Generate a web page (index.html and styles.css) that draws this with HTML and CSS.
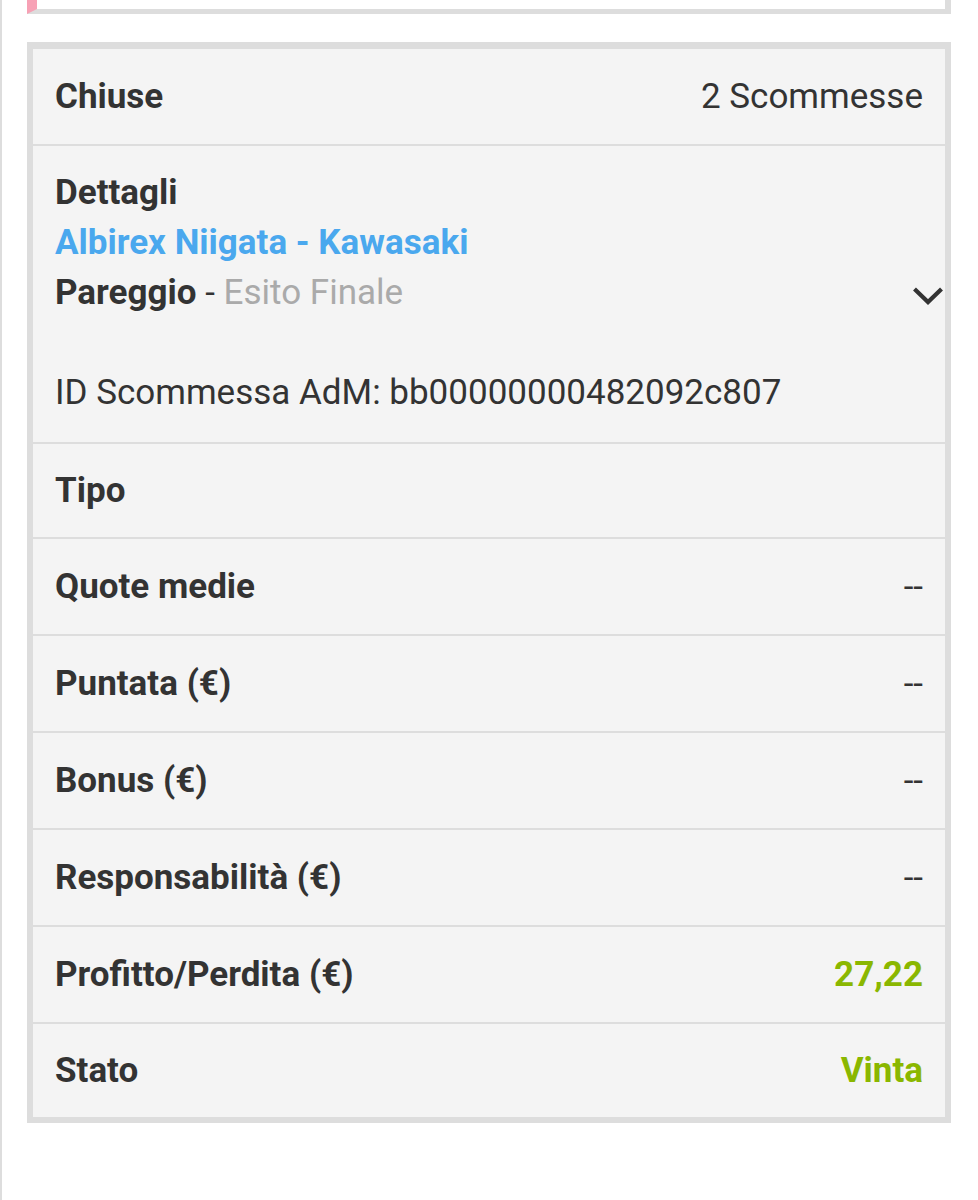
FILE: index.html
```html
<!DOCTYPE html>
<html>
  <head>
    <title>Scommesse chiuse</title>
    <link rel="stylesheet" href="styles.css">
  </head>
  <body>
    <div class="page">
      <!-- previous card, cut off at the top -->
      <div class="prev-card"></div>

      <div class="bet-card">
        <div class="row">
          <span class="label">Chiuse</span>
          <span class="value">2 Scommesse</span>
        </div>

        <div class="details">
          <div class="label">Dettagli</div>
          <div class="event">Albirex Niigata - Kawasaki</div>
          <div class="selection">
            <span><b>Pareggio</b> - <span class="market">Esito Finale</span></span>
            <svg class="chevron" width="32" height="20" viewBox="0 0 32 20">
              <path d="M2.5 3 L16 16 L29.5 3" fill="none" stroke="#333" stroke-width="4.2"/>
            </svg>
          </div>
          <div class="spacer"></div>
          <div class="bet-id">ID Scommessa AdM: bb00000000482092c807</div>
        </div>

        <div class="row short">
          <span class="label">Tipo</span>
        </div>
        <div class="row">
          <span class="label">Quote medie</span>
          <span class="value">--</span>
        </div>
        <div class="row">
          <span class="label">Puntata (€)</span>
          <span class="value">--</span>
        </div>
        <div class="row">
          <span class="label">Bonus (€)</span>
          <span class="value">--</span>
        </div>
        <div class="row">
          <span class="label">Responsabilità (€)</span>
          <span class="value">--</span>
        </div>
        <div class="row">
          <span class="label">Profitto/Perdita (€)</span>
          <span class="value win">27,22</span>
        </div>
        <div class="row short">
          <span class="label">Stato</span>
          <span class="value win">Vinta</span>
        </div>
      </div>
    </div>
  </body>
</html>
```

FILE: styles.css
```css
body {
  margin: 0;
  background-color: #fff;
  font-family: Roboto, "Noto Sans", sans-serif;
  color: #333;
}

.page {
  min-height: 1200px;
  border-left: 2px solid #ddd;
  padding-left: 25px;
  width: 924px;
}

.prev-card {
  height: 9px;
  background-color: #fff;
  border-left: 10px solid #f7a1b5;
  border-right: 6px solid #ddd;
  border-bottom: 5px solid #ddd;
}

.bet-card {
  margin-top: 28px;
  background-color: #f4f4f4;
  border: 6px solid #ddd;
  border-top-width: 7px;
}

.row {
  display: flex;
  justify-content: space-between;
  align-items: center;
  height: 95px;
  padding: 0 22px;
  font-size: 35px;
  border-top: 2px solid #ddd;
}
.row:first-child {
  border-top: none;
}
.row.short {
  height: 93px;
}

.label {
  font-weight: bold;
}

.value.win {
  color: #8ab700;
  font-weight: bold;
}

.details {
  border-top: 2px solid #ddd;
  padding: 22px 0 24px 22px;
  font-size: 35px;
  line-height: 50px;
}

.event {
  color: #4aa8ee;
  font-weight: bold;
}

.selection {
  display: flex;
  justify-content: space-between;
  align-items: center;
}
.market {
  color: #aaa;
}
.chevron {
  margin-right: 1px;
  margin-top: 6px;
}

.spacer {
  height: 50px;
}
```
